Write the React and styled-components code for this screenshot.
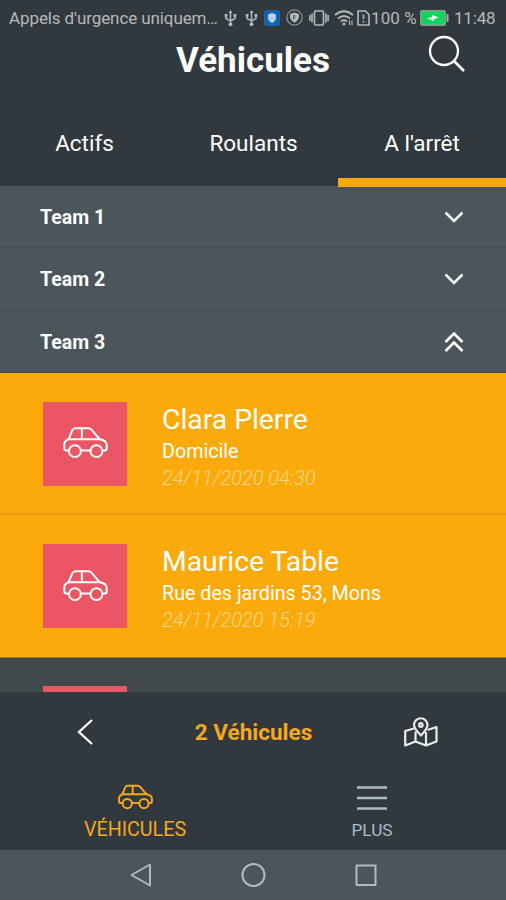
import React from "react";

import styled, { createGlobalStyle } from "styled-components";

const teams = [
  { name: "Team 1", open: false },
  { name: "Team 2", open: false },
  { name: "Team 3", open: true },
];

const vehicles = [
  { driver: "Clara Plerre", place: "Domicile", date: "24/11/2020 04:30" },
  {
    driver: "Maurice Table",
    place: "Rue des jardins 53, Mons",
    date: "24/11/2020 15:19",
  },
];

const CarIcon = ({ width, stroke = 6 }) => (
  <svg
    width={width}
    viewBox="0 0 136 95"
    fill="none"
    stroke="currentColor"
    strokeWidth={stroke}
    strokeLinejoin="round"
    strokeLinecap="round"
  >
    <path d="M17 71H10Q4 71 4 65V52Q4 42 17 37L28 10Q31 4 38 4H77Q82 4 86 8L111 37Q132 40 132 56V65Q132 71 126 71H119" />
    <path d="M54 71H83M17 37H111M57 4V37" />
    <circle cx="36" cy="73" r="18" />
    <circle cx="101" cy="73" r="18" />
  </svg>
);

const UsbIcon = () => (
  <svg width="13" height="18" viewBox="0 0 13 18" fill="none" stroke="currentColor" strokeWidth="1.5">
    <path d="M6.5 3V15M2 6.5V9.5L6.5 12L11 9.5V6.5" />
    <path d="M4.5 4L6.5 1L8.5 4Z" fill="currentColor" stroke="none" />
    <path d="M0.7 5h2.8v2.8H0.7zM9.5 5h2.8v2.8H9.5z" fill="currentColor" stroke="none" />
    <circle cx="6.5" cy="15.3" r="1.9" fill="currentColor" stroke="none" />
  </svg>
);

const App = () => {
  return (
    <Screen>
      <GlobalStyle />

      <StatusBar>
        <Carrier>Appels d'urgence uniquem…</Carrier>
        <StatusIcons>
          <UsbIcon />
          <UsbIcon />
          <svg width="16" height="16" viewBox="0 0 16 16">
            <rect width="16" height="16" rx="3" fill="#1565ab" />
            <path d="M8 3L12 4.5V8Q11.5 11.5 8 13Q4.5 11.5 4 8V4.5Z" fill="#b4cfe2" />
          </svg>
          <svg width="17" height="17" viewBox="0 0 17 17" fill="none">
            <circle cx="8.5" cy="8.5" r="7.7" stroke="#8d9397" strokeWidth="1.2" />
            <path d="M8.5 3.5L13 5V8Q12.5 11.5 8.5 13.8Q4.5 11.5 4 8V5Z" fill="#b5b9bb" />
            <path d="M7.5 10.5V6.5H9Q10.3 7.3 9 8.7H7.5" stroke="#5b6266" />
          </svg>
          <svg width="20" height="16" viewBox="0 0 20 16" fill="none" stroke="currentColor" strokeWidth="1.6">
            <rect x="5.5" y="1" width="9" height="14" rx="1" />
            <path d="M3 3.5V12.5M17 3.5V12.5M0.9 5V11M19.1 5V11" />
          </svg>
          <svg width="20" height="16" viewBox="0 0 20 16" fill="none" stroke="currentColor" strokeWidth="1.7">
            <path d="M1 5Q10 -2.5 19 5M4 8.5Q10 3.5 16 8.5M6.8 11.5Q10 9 13 11.5" />
            <circle cx="10" cy="14" r="1.5" fill="currentColor" stroke="none" />
            <path d="M15.5 10.5V15M18 10.5V15" strokeWidth="1.2" />
          </svg>
          <svg width="13" height="16" viewBox="0 0 13 16" fill="none" stroke="currentColor" strokeWidth="1.6">
            <path d="M1 1H8.5L12 4.5V15H1Z" />
            <path d="M6.5 4.5V9M6.5 10.8V12.5" />
          </svg>
        </StatusIcons>
        <Percent>100 %</Percent>
        <svg width="29" height="16" viewBox="0 0 29 16">
          <rect x="0.7" y="0.7" width="24.6" height="14.6" rx="1.5" fill="#0fd65b" stroke="#8b9a92" strokeWidth="1.4" />
          <rect x="26.5" y="4" width="2" height="8" fill="#a9adb0" />
          <path d="M7 8.5L12 7V5L19 7.5L14 9.2V11Z" fill="#eafff1" />
        </svg>
        <Clock>11:48</Clock>
      </StatusBar>

      <Header>
        <Title>Véhicules</Title>
        <SearchButton aria-label="Rechercher">
          <svg width="38" height="38" viewBox="0 0 38 38" fill="none" stroke="currentColor" strokeWidth="2.3">
            <circle cx="16" cy="16" r="14" />
            <path d="M26 26L36 36" strokeWidth="2.7" />
          </svg>
        </SearchButton>
      </Header>

      <Tabs>
        <Tab>Actifs</Tab>
        <Tab>Roulants</Tab>
        <Tab $active>A l'arrêt</Tab>
      </Tabs>

      {teams.map((team) => (
        <TeamRow key={team.name}>
          <TeamName>{team.name}</TeamName>
          <svg width="20" height="22" viewBox="0 0 20 22" fill="none" stroke="currentColor" strokeWidth="2.5">
            {team.open ? (
              <path d="M1.5 11L10 2.5L18.5 11M1.5 20L10 11.5L18.5 20" />
            ) : (
              <path d="M1.5 6.5L10 15L18.5 6.5" />
            )}
          </svg>
        </TeamRow>
      ))}

      {vehicles.map((vehicle) => (
        <VehicleCard key={vehicle.driver}>
          <Thumb>
            <CarIcon width={45} />
          </Thumb>
          <VehicleInfo>
            <Driver>{vehicle.driver}</Driver>
            <Place>{vehicle.place}</Place>
            <DateLabel>{vehicle.date}</DateLabel>
          </VehicleInfo>
        </VehicleCard>
      ))}

      <NextCard>
        <Thumb />
      </NextCard>

      <Summary>
        <svg width="18" height="28" viewBox="0 0 18 28" fill="none" stroke="#fff" strokeWidth="2.3">
          <path d="M16 2L3 14L16 26" />
        </svg>
        <Count>2 Véhicules</Count>
        <svg width="34" height="30" viewBox="0 0 34 30" fill="none" stroke="#e8ebec" strokeWidth="2.2" strokeLinejoin="round">
          <path d="M10 11.5L1.200 14V28.500L11.5 24.5L22 28.5L32.500 24.5V10L23.5 13M11.5 14.5V24.5M22 15V28.5" />
          <path d="M17 18.5Q10 11.500 10 8A6.700 6.700 0 0 1 23.500 8Q23.500 11.500 17 18.500Z" />
          <circle cx="16.800" cy="8" r="1.800" />
        </svg>
      </Summary>

      <BottomNav>
        <NavItem $color="#f5a81a">
          <CarIcon width={35} stroke={7.5} />
          <NavLabel>VÉHICULES</NavLabel>
        </NavItem>
        <NavItem $color="#a9bcc8">
          <svg width="30" height="26" viewBox="0 0 30 26" stroke="currentColor" strokeWidth="2.7">
            <path d="M0 3.5H30M0 14H30M0 24.5H30" />
          </svg>
          <NavLabel $small>PLUS</NavLabel>
        </NavItem>
      </BottomNav>

      <SystemBar>
        <svg width="24" height="26" viewBox="0 0 24 26" fill="none" stroke="currentColor" strokeWidth="2" strokeLinejoin="round">
          <path d="M21 2.500V23.500L2.500 13Z" />
        </svg>
        <svg width="26" height="26" viewBox="0 0 26 26" fill="none" stroke="currentColor" strokeWidth="2">
          <circle cx="12.500" cy="13" r="11" />
        </svg>
        <svg width="24" height="26" viewBox="0 0 24 26" fill="none" stroke="currentColor" strokeWidth="2" strokeLinejoin="round">
          <rect x="2.500" y="3.500" width="19" height="19.500" />
        </svg>
      </SystemBar>
    </Screen>
  );
};

export default App;

const GlobalStyle = createGlobalStyle`
  * {
    box-sizing: border-box;
  }

  body {
    margin: 0;
    background: #31393e;
    font-family: Roboto, "Liberation Sans", sans-serif;
  }
`;

const Screen = styled.div`
  width: 506px;
  height: 900px;
  overflow: hidden;
  display: flex;
  flex-direction: column;
  background: #31393e;
  color: #fff;

  svg {
    display: block;
    flex: none;
  }
`;

const StatusBar = styled.div`
  height: 35px;
  flex: none;
  display: flex;
  align-items: center;
  padding-left: 9px;
  color: #b5b8ba;
  font-size: 17px;
  white-space: nowrap;
`;

const Carrier = styled.span`
  width: 215px;
  letter-spacing: -0.1px;
`;

const StatusIcons = styled.div`
  display: grid;
  grid-template-columns: 21px 19px 22px 23px 25px 23px 14px;
  align-items: center;
  width: 147px;
`;

const Percent = styled.span`
  width: 49px;
  letter-spacing: 0.1px;
`;

const Clock = styled.span`
  margin-left: 5px;
  letter-spacing: -0.2px;
`;

const Header = styled.header`
  height: 65px;
  flex: none;
  display: grid;
  grid-template-columns: 1fr auto 1fr;
`;

const Title = styled.h1`
  grid-column: 2;
  margin: 0;
  padding-top: 4px;
  font-size: 35px;
  line-height: 43px;
  font-weight: bold;
`;

const SearchButton = styled.button`
  justify-self: end;
  align-self: start;
  margin-right: 40px;
  padding: 0;
  border: none;
  background: none;
  color: #fff;
`;

const Tabs = styled.nav`
  height: 86px;
  flex: none;
  display: grid;
  grid-template-columns: 169px 169px 1fr;
`;

const Tab = styled.div`
  display: flex;
  align-items: center;
  justify-content: center;
  position: relative;
  z-index: 1;
  font-size: 22.5px;
  margin-bottom: ${({ $active }) => ($active ? "-1px" : "0")};
  padding-top: ${({ $active }) => ($active ? "8px" : "0")};
  border-bottom: ${({ $active }) => ($active ? "9px solid #faa90c" : "none")};
`;

const TeamRow = styled.div`
  height: 62.3px;
  flex: none;
  display: flex;
  align-items: center;
  justify-content: space-between;
  padding: 1px 42px 0 40px;
  background: #4b555c;
  border-bottom: 1px solid #444e54;
`;

const TeamName = styled.span`
  padding-top: 1px;
  font-size: 19.5px;
  font-weight: bold;
`;

const VehicleCard = styled.article`
  height: 142.5px;
  flex: none;
  display: flex;
  padding: 29px 0 0 43px;
  background: #faab0b;
  border-bottom: 2px solid #e69d12;

  &:nth-last-child(5) {
    border-bottom: 1px solid #8f7a3a;
  }
`;

const Thumb = styled.div`
  width: 84px;
  height: 84px;
  flex: none;
  display: flex;
  align-items: center;
  justify-content: center;
  background: #ec5564;

  svg {
    margin-bottom: 2px;
  }
`;

const VehicleInfo = styled.div`
  display: flex;
  flex-direction: column;
  padding-left: 35px;
`;

const Driver = styled.span`
  font-size: 28.3px;
  line-height: 36px;
`;

const Place = styled.span`
  font-size: 19.7px;
  line-height: 27px;
`;

const DateLabel = styled.span`
  font-size: 20px;
  line-height: 27px;
  font-weight: 300;
  font-style: italic;
  color: #fdd58a;
`;

const NextCard = styled.div`
  height: 34px;
  flex: none;
  padding: 28px 0 0 43px;
  overflow: hidden;
  background: #41494d;
`;

const Summary = styled.div`
  height: 80px;
  flex: none;
  display: grid;
  grid-template-columns: 76px 1fr 102px;
  align-items: center;
  border-top: 1px solid #383f44;

  svg:first-child {
    justify-self: end;
    margin-right: -18px;
  }
`;

const Count = styled.span`
  padding-left: 27px;
  text-align: center;
  color: #f5a81a;
  font-size: 22.5px;
  font-weight: bold;
`;

const BottomNav = styled.nav`
  height: 78px;
  flex: none;
  display: flex;
  justify-content: space-between;
  padding: 12px 66px 0 67px;
`;

const NavItem = styled.div`
  display: flex;
  flex-direction: column;
  align-items: center;
  gap: ${({ $small }) => ($small ? "7px" : "8px")};
  width: 136px;
  color: ${({ $color }) => $color};

  svg {
    height: 26px;
  }
`;

const NavLabel = styled.span`
  font-size: ${({ $small }) => ($small ? "17.2px" : "19.7px")};
  line-height: 24px;
`;

const SystemBar = styled.div`
  height: 50px;
  flex: none;
  display: flex;
  align-items: center;
  justify-content: space-between;
  padding: 0 128px 0 129px;
  background: #4b555c;
  color: #b4b9bc;
`;
